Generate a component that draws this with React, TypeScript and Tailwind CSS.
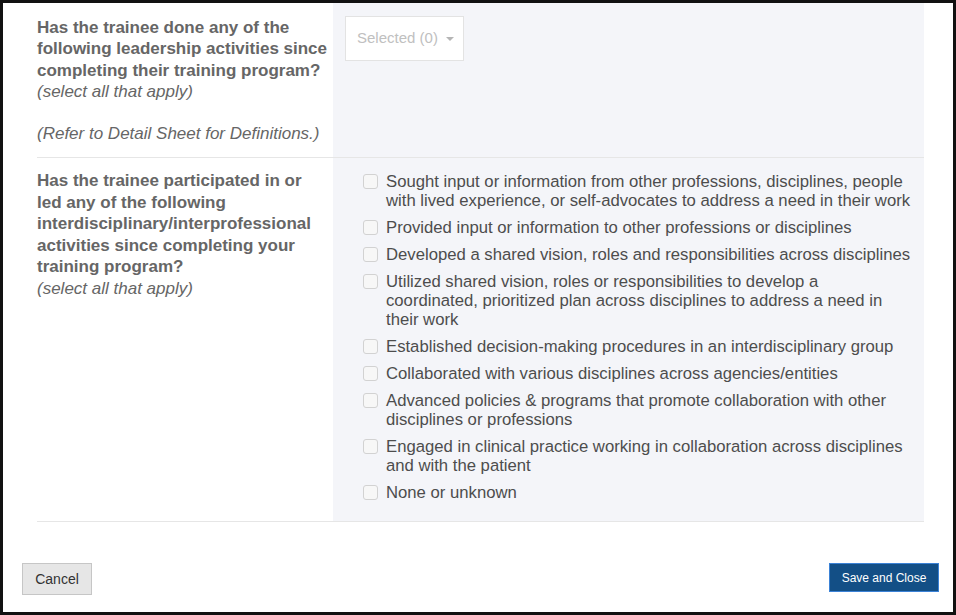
const interOptions: string[][] = [
  [
    "Sought input or information from other professions, disciplines, people",
    "with lived experience, or self-advocates to address a need in their work",
  ],
  ["Provided input or information to other professions or disciplines"],
  ["Developed a shared vision, roles and responsibilities across disciplines"],
  [
    "Utilized shared vision, roles or responsibilities to develop a",
    "coordinated, prioritized plan across disciplines to address a need in",
    "their work",
  ],
  ["Established decision-making procedures in an interdisciplinary group"],
  ["Collaborated with various disciplines across agencies/entities"],
  [
    "Advanced policies & programs that promote collaboration with other",
    "disciplines or professions",
  ],
  [
    "Engaged in clinical practice working in collaboration across disciplines",
    "and with the patient",
  ],
  ["None or unknown"],
];

function Lines({ lines }: { lines: string[] }) {
  return (
    <>
      {lines.map((l, i) => (
        <span key={i} className="block whitespace-nowrap">
          {l}
        </span>
      ))}
    </>
  );
}

export default function App() {
  return (
    <div
      className="w-[956px] h-[615px] bg-white border-[3px] border-[#111] flex flex-col overflow-hidden"
      style={{ fontFamily: '"Liberation Sans", Arial, sans-serif' }}
    >
      <div className="ml-[34px] mr-[29px] flex flex-col">
        {/* Leadership activities */}
        <div className="flex border-b border-[#e6e6e6] h-[155px]">
          <div className="w-[296px] pt-[14px] text-[17px] leading-[21.3px] text-[#666]">
            <div className="font-bold">
              <Lines
                lines={[
                  "Has the trainee done any of the",
                  "following leadership activities since",
                  "completing their training program?",
                ]}
              />
            </div>
            <div className="italic">(select all that apply)</div>
            <div className="h-[21.3px]" />
            <div className="italic whitespace-nowrap">(Refer to Detail Sheet for Definitions.)</div>
          </div>
          <div className="flex-1 bg-[#f4f5f9] pl-[12px] pt-[13px]">
            <div className="w-[119px] h-[45px] bg-white border border-[#e3e3e3] flex items-center pl-[11px] gap-[8px] text-[15px] text-[#c0c0c0]">
              <span>Selected (0)</span>
              <span className="w-0 h-0 border-l-[4px] border-r-[4px] border-t-[4px] border-l-transparent border-r-transparent border-t-[#b5b5b5]" />
            </div>
          </div>
        </div>

        {/* Interdisciplinary activities */}
        <div className="flex border-b border-[#e6e6e6] h-[364px]">
          <div className="w-[296px] pt-[12px] text-[17px] leading-[21.5px] text-[#666]">
            <div className="font-bold">
              <Lines
                lines={[
                  "Has the trainee participated in or",
                  "led any of the following",
                  "interdisciplinary/interprofessional",
                  "activities since completing your",
                  "training program?",
                ]}
              />
            </div>
            <div className="italic">(select all that apply)</div>
          </div>
          <div className="flex-1 bg-[#f4f5f9] pl-[30px] pt-[14px] flex flex-col gap-[8px]">
            {interOptions.map((lines, i) => (
              <label key={i} className="flex items-start gap-[8px] text-[16.7px] leading-[19px] text-[#4d4d4d]">
                <span className="mt-[2px] w-[15px] h-[15px] shrink-0 rounded-[3px] border border-[#d2d2d2] bg-[#f7f7f7]" />
                <span>
                  <Lines lines={lines} />
                </span>
              </label>
            ))}
          </div>
        </div>
      </div>

      {/* Footer */}
      <div className="mt-[41px] pl-[19px] pr-[14px] flex justify-between items-start">
        <button className="w-[70px] h-[32px] bg-[#e6e6e6] border border-[#c6c6c6] text-[14px] text-[#333]">
          Cancel
        </button>
        <button className="w-[110px] h-[29px] bg-[#134f86] border border-[#3b82d6] text-[12px] text-white">
          Save and Close
        </button>
      </div>
    </div>
  );
}
